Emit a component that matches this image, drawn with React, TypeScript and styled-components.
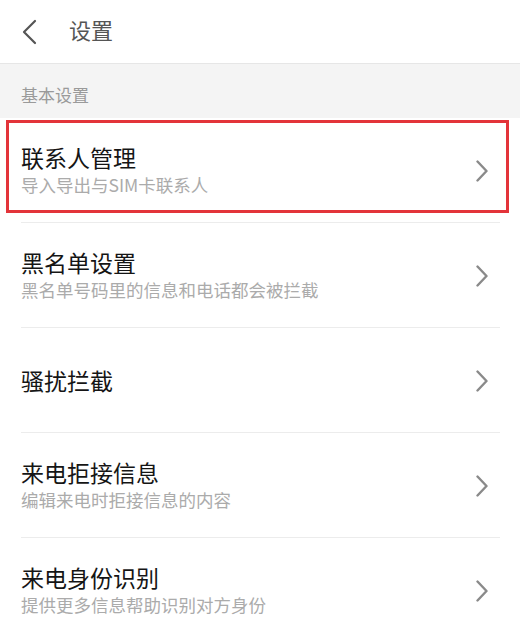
import React from "react";
import styled, { createGlobalStyle } from "styled-components";

const Global = createGlobalStyle`
  html, body { margin: 0; padding: 0; background: #fff; overflow: hidden; }
  body { font-family: "Noto Sans CJK SC", "Noto Sans", sans-serif; }
  * { box-sizing: border-box; }
`;

const Page = styled.div`
  width: 520px;
  height: 633px;
  overflow: hidden;
  background: #fff;
  display: flex;
  flex-direction: column;
`;

const Header = styled.header`
  height: 64px;
  flex: none;
  display: flex;
  align-items: center;
  padding-left: 20px;
  gap: 31px;
  border-bottom: 1px solid #e6e6e6;
  background: #fff;
`;

const Title = styled.h1`
  margin: 0;
  font-size: 22px;
  font-weight: 400;
  color: #555;
  line-height: 1;
  padding-bottom: 5px;
`;

const SectionLabel = styled.div`
  height: 54px;
  flex: none;
  background: #f4f4f4;
  display: flex;
  align-items: center;
  padding: 7px 0 0 21px;
  font-size: 17px;
  color: #9a9a9a;
`;

const List = styled.div`
  display: flex;
  flex-direction: column;
`;

const Row = styled.div`
  position: relative;
  height: 105px;
  flex: none;
  display: flex;
  align-items: center;
  padding: 0 32px 0 21px;
  &::after {
    content: "";
    position: absolute;
    left: 21px;
    right: 20px;
    bottom: 0;
    height: 1px;
    background: #ececec;
  }
`;

const Texts = styled.div`
  flex: 1;
  display: flex;
  flex-direction: column;
  gap: 4px;
  padding-bottom: 1px;
`;

const RowTitle = styled.div`
  font-size: 23px;
  color: #151515;
  line-height: 26px;
`;

const RowSub = styled.div`
  font-size: 17.5px;
  color: #ababab;
  line-height: 22px;
`;

const Highlight = styled.div`
  position: absolute;
  left: 6px;
  right: 11px;
  top: 2px;
  bottom: 10px;
  border: 3px solid #e3343a;
  pointer-events: none;
`;

const Back = () => (
  <svg width="18" height="26" viewBox="0 0 18 26" fill="none">
    <path d="M15 2 L4 13 L15 24" stroke="#555" strokeWidth="2.2" strokeLinecap="round" strokeLinejoin="round" />
  </svg>
);

const Chevron = () => (
  <svg width="12" height="22" viewBox="0 0 12 22" fill="none">
    <path d="M1.5 1.5 L10.5 11 L1.5 20.5" stroke="#8a8a8a" strokeWidth="2.4" strokeLinecap="round" strokeLinejoin="round" />
  </svg>
);

const items = [
  { title: "联系人管理", sub: "导入导出与SIM卡联系人", mark: true },
  { title: "黑名单设置", sub: "黑名单号码里的信息和电话都会被拦截" },
  { title: "骚扰拦截" },
  { title: "来电拒接信息", sub: "编辑来电时拒接信息的内容" },
  { title: "来电身份识别", sub: "提供更多信息帮助识别对方身份" },
];

export default function App() {
  return (
    <>
      <Global />
      <Page>
        <Header>
          <Back />
          <Title>设置</Title>
        </Header>
        <SectionLabel>基本设置</SectionLabel>
        <List>
          {items.map((it) => (
            <Row key={it.title}>
              <Texts>
                <RowTitle>{it.title}</RowTitle>
                {it.sub && <RowSub>{it.sub}</RowSub>}
              </Texts>
              <Chevron />
              {it.mark && <Highlight />}
            </Row>
          ))}
        </List>
      </Page>
    </>
  );
}
